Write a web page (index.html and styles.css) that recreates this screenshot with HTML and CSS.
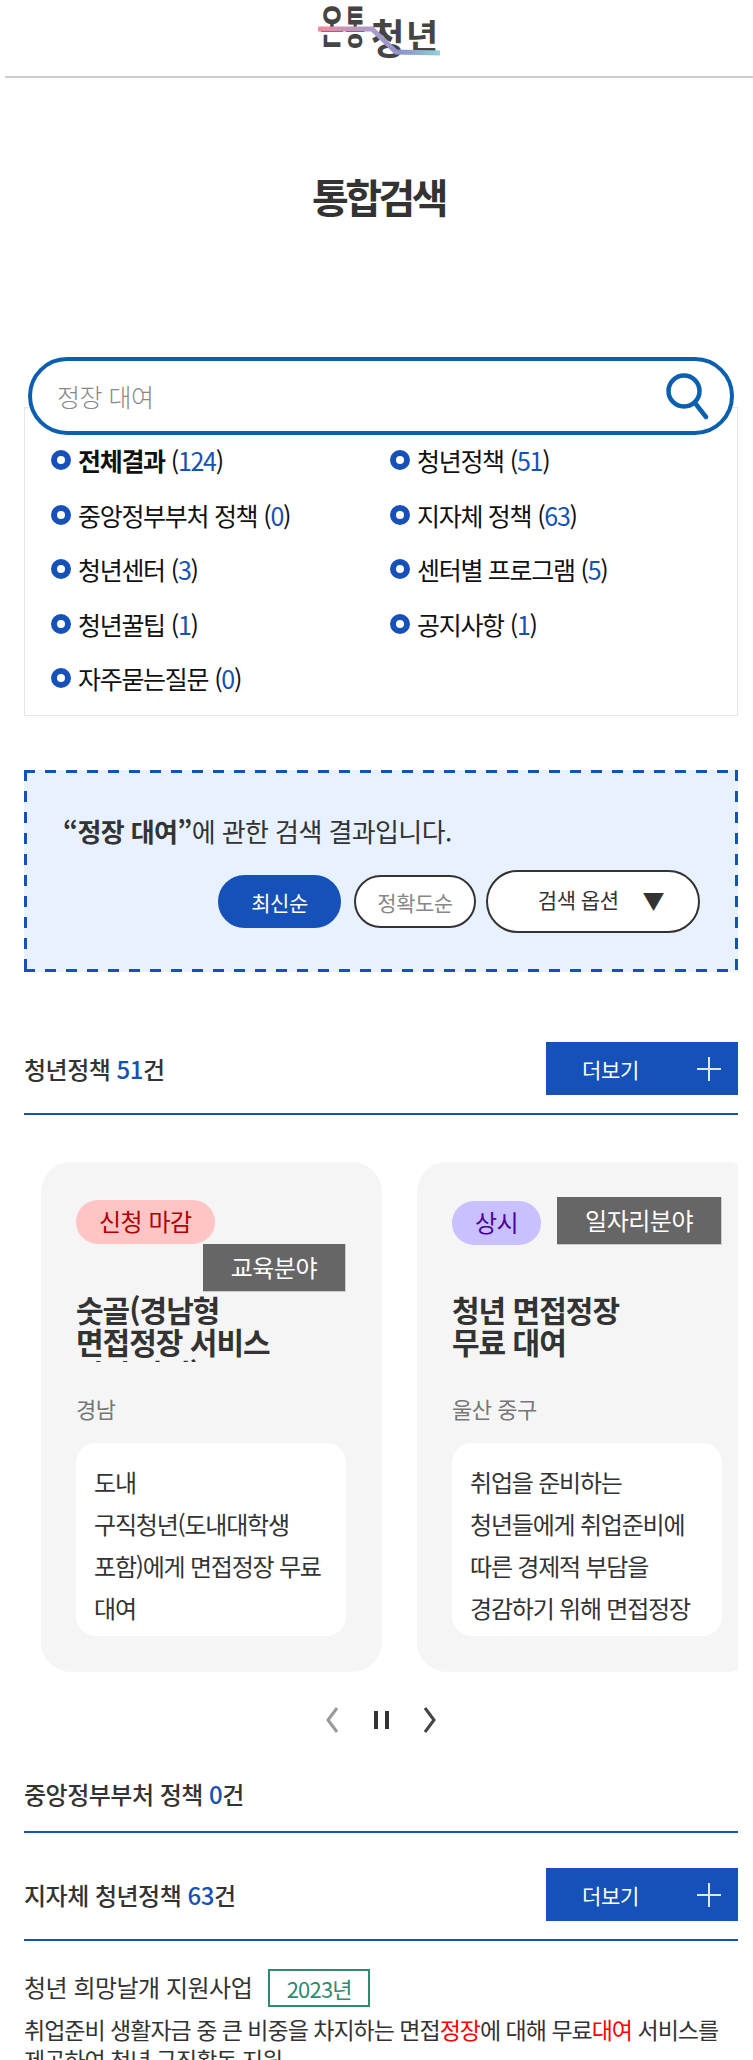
FILE: index.html
```html
<!DOCTYPE html>
<html lang="ko">

<head>
    <meta charset="UTF-8">
    <meta name="viewport" content="width=device-width, initial-scale=1.0">
    <title>통합검색</title>
    <link rel="stylesheet" href="styles.css">
</head>

<body>
    <header class="top">
        <svg class="logo" width="130" height="60" viewBox="315 5 130 60">
            <defs>
                <linearGradient id="logoLine" x1="319" y1="0" x2="441" y2="0" gradientUnits="userSpaceOnUse">
                    <stop offset="0" stop-color="#f08aa0" />
                    <stop offset=".45" stop-color="#a99ccd" />
                    <stop offset=".68" stop-color="#8f93cb" />
                    <stop offset="1" stop-color="#8ed2d4" />
                </linearGradient>
            </defs>
            <g class="logo-text">
                <text transform="translate(321 47) scale(1 1.75)" font-size="26">온</text>
                <text transform="translate(346 47) scale(.85 1.75)" font-size="26">통</text>
                <text transform="translate(372 57) scale(1.3 1.45)" font-size="28">청</text>
                <text transform="translate(407 52) scale(1.25 1.2)" font-size="28">년</text>
            </g>
            <polyline class="logo-line" points="319,32 373,32 397,55 441,56" stroke="url(#logoLine)" />
        </svg>
    </header>

    <h1 class="page-title">통합검색</h1>

    <main class="wrap">
        <form class="search">
            <input class="search-input" type="text" placeholder="정장 대여">
            <svg class="search-icon" width="46" height="48" viewBox="0 0 46 48">
                <circle cx="20" cy="19" r="15.5" />
                <line x1="31" y1="31" x2="42" y2="45" />
            </svg>
        </form>

        <ul class="cate">
            <li class="on"><i></i>전체결과 <span class="count">(<b>124</b>)</span></li>
            <li><i></i>청년정책 <span class="count">(<b>51</b>)</span></li>
            <li><i></i>중앙정부부처 정책 <span class="count">(<b>0</b>)</span></li>
            <li><i></i>지자체 정책 <span class="count">(<b>63</b>)</span></li>
            <li><i></i>청년센터 <span class="count">(<b>3</b>)</span></li>
            <li><i></i>센터별 프로그램 <span class="count">(<b>5</b>)</span></li>
            <li><i></i>청년꿀팁 <span class="count">(<b>1</b>)</span></li>
            <li><i></i>공지사항 <span class="count">(<b>1</b>)</span></li>
            <li><i></i>자주묻는질문 <span class="count">(<b>0</b>)</span></li>
        </ul>

        <section class="notice">
            <p class="notice-text"><strong>“정장 대여”</strong>에 관한 검색 결과입니다.</p>
            <div class="notice-btns">
                <button class="sort on" type="button">최신순</button>
                <button class="sort" type="button">정확도순</button>
                <button class="option" type="button"><span>검색 옵션</span><em>▼</em></button>
            </div>
        </section>

        <div class="head first">
            <h2>청년정책 <b>51</b>건</h2>
            <a class="more" href="#">더보기<span class="plus"></span></a>
        </div>

        <div class="slider">
            <article class="card">
                <div class="card-tags">
                    <span class="state end">신청 마감</span>
                    <span class="field">교육분야</span>
                </div>
                <h3>숫골(경남형<br>면접정장 서비스<br>지원 사업)</h3>
                <p class="area">경남</p>
                <div class="card-text">도내<br>구직청년(도내대학생<br>포함)에게 면접정장 무료<br>대여</div>
            </article>
            <article class="card">
                <div class="card-tags">
                    <span class="state always">상시</span>
                    <span class="field">일자리분야</span>
                </div>
                <h3>청년 면접정장<br>무료 대여</h3>
                <p class="area">울산 중구</p>
                <div class="card-text">취업을 준비하는<br>청년들에게 취업준비에<br>따른 경제적 부담을<br>경감하기 위해 면접정장<br>무료 대여</div>
            </article>
        </div>

        <div class="pager">
            <svg class="prev" width="14" height="26" viewBox="0 0 14 26"><polyline points="12,1 3,13 12,25" /></svg>
            <span class="pause"></span>
            <svg class="next" width="14" height="26" viewBox="0 0 14 26"><polyline points="2,1 11,13 2,25" /></svg>
        </div>

        <div class="head empty">
            <h2>중앙정부부처 정책 <b>0</b>건</h2>
        </div>

        <div class="head">
            <h2>지자체 청년정책 <b>63</b>건</h2>
            <a class="more" href="#">더보기<span class="plus"></span></a>
        </div>

        <div class="item">
            <div class="item-top">
                <h3>청년 희망날개 지원사업</h3>
                <span class="year">2023년</span>
            </div>
            <p>취업준비 생활자금 중 큰 비중을 차지하는 면접<mark>정장</mark>에 대해 무료<mark>대여</mark> 서비스를 제공하여 청년 구직활동 지원</p>
        </div>
    </main>
</body>

</html>
```

FILE: styles.css
```css
* {
    margin: 0;
    padding: 0;
    box-sizing: border-box;
}

html,
body {
    height: 2060px;
    overflow: hidden;
}

body {
    background-color: #fff;
    font-family: "Noto Sans CJK KR", "Noto Sans", sans-serif;
    color: #333;
}

ul {
    list-style: none;
}

a {
    text-decoration: none;
}

.top {
    display: flex;
    justify-content: center;
    height: 78px;
    margin-left: 5px;
    padding-top: 2px;
    border-bottom: 2px solid #ccc;
}

.logo-text {
    fill: #444;
    font-weight: 700;
}

.logo-line {
    fill: none;
    stroke-width: 5;
}

.page-title {
    margin-top: 93px;
    padding-left: 4px;
    font-size: 40px;
    line-height: 50px;
    font-weight: 700;
    letter-spacing: -3.6px;
    text-align: center;
}

.wrap {
    margin: 136px 15px 0 24px;
}

.search {
    position: relative;
    z-index: 1;
    height: 78px;
    margin: 0 4px;
}

.search-input {
    width: 100%;
    height: 100%;
    padding: 0 80px 0 25px;
    border: 4px solid #0a60ae;
    border-radius: 39px;
    background-color: #fff;
    font-family: inherit;
    font-size: 25px;
    font-weight: 300;
    letter-spacing: -.5px;
    outline: none;
}

.search-input::placeholder {
    color: #888;
}

.search-icon {
    position: absolute;
    right: 24px;
    top: 15px;
    fill: none;
    stroke: #0a60ae;
    stroke-width: 4.5;
    stroke-linecap: round;
}

.cate {
    display: grid;
    grid-template-columns: 339px 1fr;
    grid-auto-rows: 54.5px;
    margin-top: -28px;
    padding: 25px 0 9.5px 26px;
    border: 1px solid #e6e6e6;
    font-size: 25px;
    letter-spacing: -1.3px;
    color: #111;
}

.cate li {
    display: flex;
    align-items: center;
}

.cate li.on {
    font-weight: 700;
}

.cate i {
    width: 20px;
    height: 20px;
    margin-right: 7px;
    border: 6px solid #1551b8;
    border-radius: 50%;
}

.count {
    margin-left: 6px;
    font-weight: 400;
}

.count b {
    font-weight: 400;
    color: #1551b8;
}

/* 기본 dashed 는 점선이 짧아서 그라데이션으로 그림 */
.notice {
    height: 202px;
    margin-top: 54px;
    padding: 43px 38px 0 39px;
    background:
        repeating-linear-gradient(90deg, #1551b8 0 11px, transparent 11px 21px) left top / 100% 3px no-repeat,
        repeating-linear-gradient(90deg, #1551b8 0 11px, transparent 11px 21px) left bottom / 100% 3px no-repeat,
        repeating-linear-gradient(180deg, #1551b8 0 11px, transparent 11px 21px) left top / 3px 100% no-repeat,
        repeating-linear-gradient(180deg, #1551b8 0 11px, transparent 11px 21px) right top / 3px 100% no-repeat,
        #e8f1ff;
}

.notice-text {
    font-size: 26px;
    line-height: 36px;
    letter-spacing: -.6px;
}

.notice-btns {
    display: flex;
    align-items: center;
    justify-content: flex-end;
    gap: 13px;
    margin-top: 21px;
}

.sort {
    width: 123px;
    height: 53px;
    border: 2px solid #333;
    border-radius: 27px;
    background-color: #fff;
    font-family: inherit;
    font-size: 21px;
    letter-spacing: -.5px;
    color: #888;
}

.sort + .sort {
    width: 122px;
}

.sort.on {
    border-color: #1551b8;
    background-color: #1551b8;
    color: #fff;
}

.option {
    display: flex;
    align-items: center;
    justify-content: flex-end;
    width: 214px;
    height: 63px;
    margin-left: -3px;
    padding: 0 34px 6px 0;
    border: 2px solid #333;
    border-radius: 32px;
    background-color: #fff;
    font-family: inherit;
    font-size: 21px;
    letter-spacing: -.5px;
    color: #333;
}

.option em {
    margin-left: 24px;
    font-style: normal;
    font-size: 22px;
}

.head {
    display: flex;
    align-items: center;
    justify-content: space-between;
    margin-top: 35px;
    padding-bottom: 18px;
    border-bottom: 2px solid #1551b8;
}

.head.first {
    margin-top: 70px;
}

.head.empty {
    margin-top: 44px;
    padding-bottom: 19px;
}

.head h2 {
    font-size: 24px;
    line-height: 36px;
    font-weight: 500;
    letter-spacing: -.5px;
}

.head b {
    font-weight: 500;
    color: #1551b8;
}

.more {
    display: flex;
    align-items: center;
    width: 192px;
    height: 53px;
    padding-left: 36px;
    background-color: #1551b8;
    font-size: 21px;
    letter-spacing: -.3px;
    color: #fff;
}

.plus {
    position: relative;
    width: 24px;
    height: 24px;
    margin-left: 58px;
}

.plus::before,
.plus::after {
    content: "";
    position: absolute;
    background-color: #dfe8f7;
}

.plus::before {
    left: 0;
    top: 11px;
    width: 24px;
    height: 2px;
}

.plus::after {
    left: 11px;
    top: 0;
    width: 2px;
    height: 24px;
}

.slider {
    display: flex;
    gap: 35px;
    margin-top: 47px;
    padding-left: 17px;
    overflow: hidden;
}

.card {
    flex: 0 0 341px;
    height: 510px;
    padding: 35px 36px 0 35px;
    border-radius: 30px;
    background-color: #f5f5f5;
}

.card-tags {
    display: flex;
    flex-wrap: wrap;
    align-items: flex-end;
    align-content: flex-start;
    justify-content: space-between;
    height: 98px;
}

.state {
    height: 44px;
    margin-top: 3px;
    padding: 0 23px;
    border-radius: 22px;
    font-size: 24px;
    line-height: 42px;
    letter-spacing: -.5px;
}

.state.end {
    background-color: #ffc4c4;
    color: #b20000;
}

.state.always {
    background-color: #c8c0ff;
    color: #50009a;
}

.field {
    height: 48px;
    margin-left: auto;
    padding: 0 28px;
    border: 1px solid #ccc;
    border-width: 0 1px 1px 0;
    background-color: #666;
    font-size: 24px;
    line-height: 46px;
    letter-spacing: -.5px;
    color: #fff;
}

.card h3 {
    height: 69px;
    margin-top: -2px;
    overflow: hidden;
    font-size: 30px;
    line-height: 32px;
    font-weight: 700;
    letter-spacing: -1px;
}

.area {
    margin-top: 31px;
    font-size: 22px;
    line-height: 30px;
    letter-spacing: -.5px;
    color: #777;
}

.card-text {
    height: 193px;
    margin-top: 20px;
    padding: 18px 10px 0 18px;
    overflow: hidden;
    border-radius: 20px;
    background-color: #fff;
    font-size: 24px;
    line-height: 42px;
    letter-spacing: -1.2px;
    white-space: nowrap;
}

.pager {
    display: flex;
    align-items: center;
    height: 25px;
    margin-top: 35px;
    margin-left: 301px;
}

.pager svg {
    fill: none;
    stroke-width: 3;
}

.prev {
    stroke: #999;
}

.next {
    margin-left: 34px;
    stroke: #444;
}

.pause {
    width: 15px;
    height: 18px;
    margin-left: 35px;
    border: solid #333;
    border-width: 0 4px;
}

.item-top {
    display: flex;
    align-items: center;
    gap: 16px;
    margin-top: 28px;
}

.item-top h3 {
    margin-top: -3px;
    font-size: 24px;
    line-height: 36px;
    font-weight: 400;
    letter-spacing: -.5px;
}

.year {
    width: 102px;
    height: 38px;
    border: 2px solid #2e8b6e;
    font-size: 22px;
    line-height: 34px;
    letter-spacing: -.8px;
    text-align: center;
    color: #2e8b6e;
}

.item p {
    margin-top: 7px;
    font-size: 23px;
    line-height: 30px;
    letter-spacing: -1px;
}

mark {
    background: none;
    color: #f00;
}
```
